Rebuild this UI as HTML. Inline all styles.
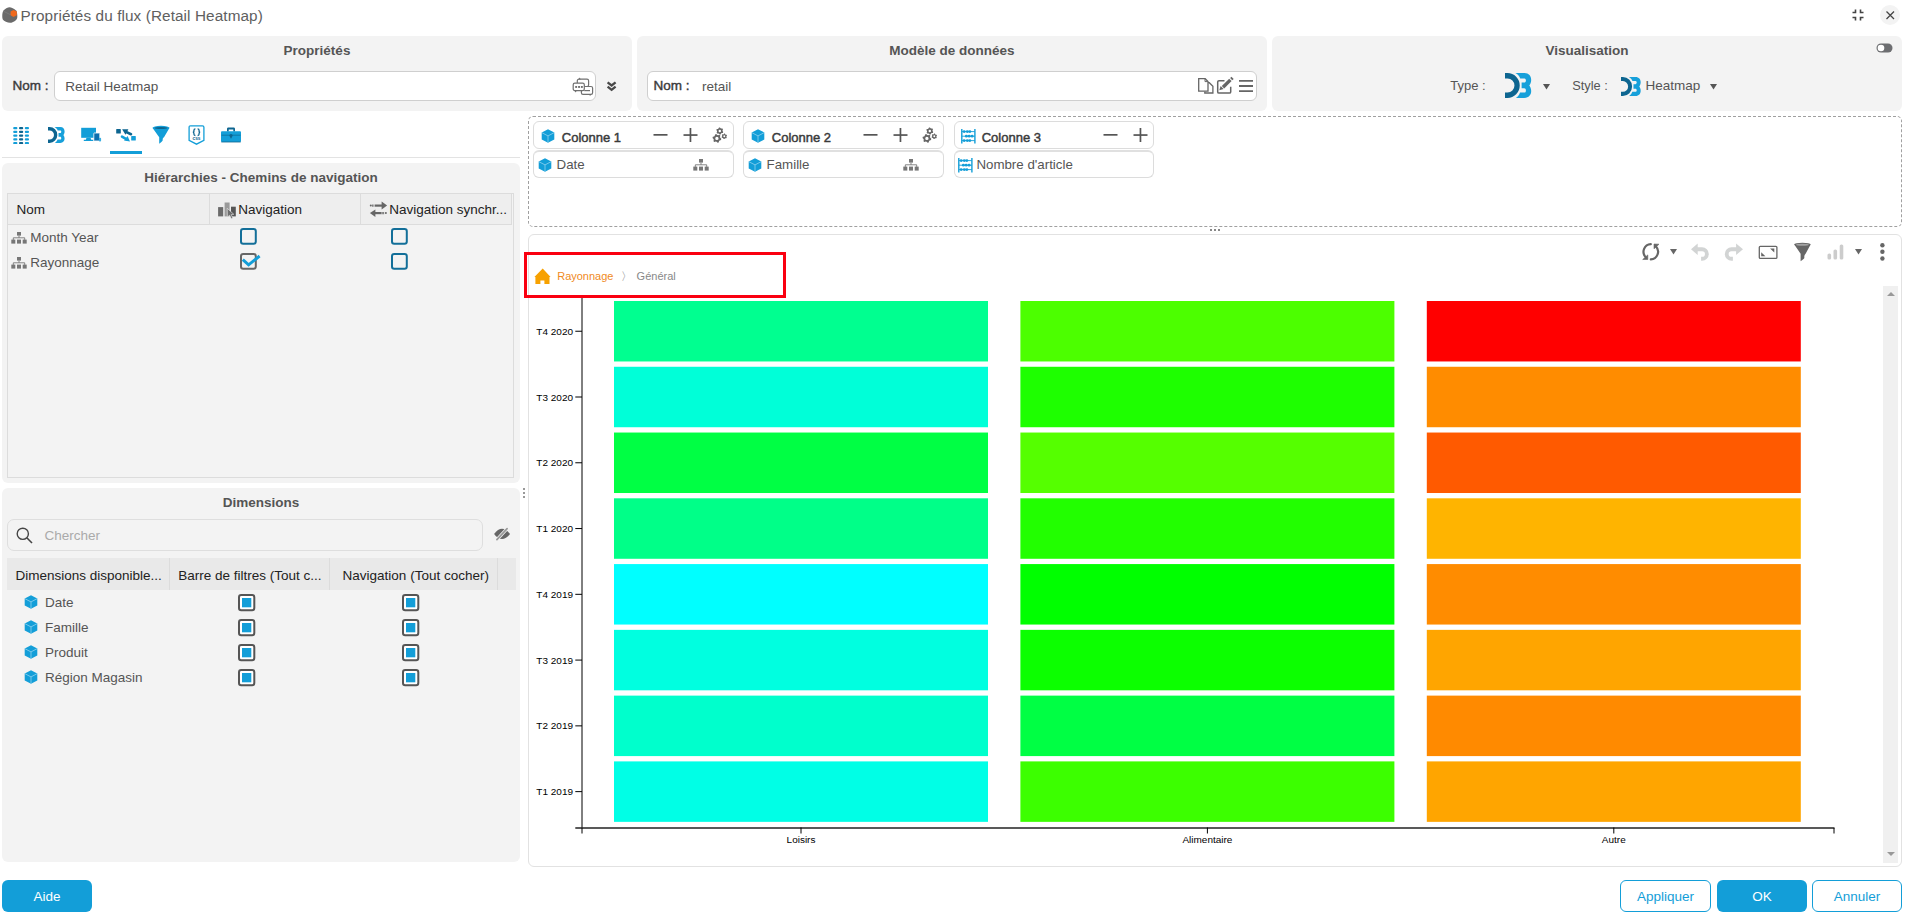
<!DOCTYPE html>
<html lang="fr"><head><meta charset="utf-8"><title>Propriétés du flux (Retail Heatmap)</title>
<style>
html,body{margin:0;padding:0;background:#fff;width:1905px;height:916px;overflow:hidden;font-family:"Liberation Sans", sans-serif;}
body{position:relative;}
</style></head><body>
<svg style="position:absolute;left:2.3px;top:6.8px;" width="16" height="17" viewBox="0 0 16 17"><path d="M7.5 0.3 C9 0.3 12.5 2 14 3.5 C15.3 5 15.5 9 15.2 11 C14.8 13.3 11 15.6 8.5 15.8 C6 16 2 14.5 0.8 12.5 C-0.2 10.5 0.3 5.5 1.3 3.8 C2.6 2 6 0.3 7.5 0.3 Z" fill="#6a6a6a"/><path d="M1 4 L8 7.5 L15 4" fill="none" stroke="#808080" stroke-width="0.7"/><path d="M11.5 2.9 L14.8 4.6 L14.8 8.2 L11.5 9.9 L8.6 8.2 L8.6 4.6 Z" fill="#f06a1e"/></svg>
<div style="position:absolute;left:20.5px;top:7.95px;font-size:15.3px;line-height:15.3px;font-weight:400;color:#606060;white-space:nowrap;letter-spacing:0.1px">Propriétés du flux (Retail Heatmap)</div>
<svg style="position:absolute;left:1852px;top:9px;" width="12" height="12" viewBox="0 0 12 12"><path d="M3.5 0.5 V3.5 H0.5 M8.5 0.5 V3.5 H11.5 M0.5 8.5 H3.5 V11.5 M11.5 8.5 H8.5 V11.5" fill="none" stroke="#444" stroke-width="1.6"/></svg>
<div style="position:absolute;left:1880px;top:5px;width:20px;height:20px;background:#f3f3f3;border-radius:50%"></div>
<svg style="position:absolute;left:1885.5px;top:10.5px;" width="9" height="9" viewBox="0 0 9 9"><path d="M0.5 0.5 L8 8 M8 0.5 L0.5 8" stroke="#444" stroke-width="1.3"/></svg>
<div style="position:absolute;left:2px;top:36px;width:630px;height:75px;background:#f3f3f3;border-radius:6px"></div>
<div style="position:absolute;left:637px;top:36px;width:630px;height:75px;background:#f3f3f3;border-radius:6px"></div>
<div style="position:absolute;left:1272px;top:36px;width:630px;height:75px;background:#f3f3f3;border-radius:6px"></div>
<div style="position:absolute;left:17.0px;top:43.77px;width:600px;text-align:center;font-size:13.5px;line-height:13.5px;font-weight:700;color:#555;white-space:nowrap;">Propriétés</div>
<div style="position:absolute;left:652.0px;top:43.77px;width:600px;text-align:center;font-size:13.5px;line-height:13.5px;font-weight:700;color:#555;white-space:nowrap;">Modèle de données</div>
<div style="position:absolute;left:1287.0px;top:43.77px;width:600px;text-align:center;font-size:13.5px;line-height:13.5px;font-weight:700;color:#555;white-space:nowrap;">Visualisation</div>
<div style="position:absolute;left:12.5px;top:78.67px;font-size:13.5px;line-height:13.5px;font-weight:400;color:#3a3a3a;white-space:nowrap;-webkit-text-stroke:0.4px #3a3a3a">Nom :</div>
<div style="position:absolute;left:54px;top:71px;width:542px;height:30px;background:#fff;border:1px solid #cfcfcf;border-radius:6px;box-sizing:border-box"></div>
<div style="position:absolute;left:65.2px;top:79.87px;font-size:13.5px;line-height:13.5px;font-weight:400;color:#555;white-space:nowrap;">Retail Heatmap</div>
<svg style="position:absolute;left:572px;top:77px;" width="22" height="20" viewBox="0 0 22 20"><rect x="5.3" y="2.1" width="11.3" height="7.4" rx="1.6" fill="#fff" stroke="#707070" stroke-width="1.2"/><path d="M6.3 2.4 L7.6 0.6 L8.8 2.4 Z" fill="#707070"/><rect x="9.4" y="9.5" width="11.2" height="7.9" rx="1.6" fill="#fff" stroke="#707070" stroke-width="1.2"/><path d="M16.8 17.2 L19.4 17.2 L18.1 19 Z" fill="#707070"/><rect x="1.2" y="6.1" width="11.1" height="7.5" rx="1.6" fill="#fff" stroke="#707070" stroke-width="1.2"/><path d="M2.6 13.4 L5.2 13.4 L3.2 15.4 Z" fill="#707070"/><rect x="3.2" y="9" width="1.9" height="1.9" fill="#707070"/><rect x="6.1" y="9" width="1.9" height="1.9" fill="#707070"/><rect x="8.9" y="9" width="1.9" height="1.9" fill="#707070"/><path d="M12.3 13.6 H18" stroke="#707070" stroke-width="1.2"/></svg>
<svg style="position:absolute;left:606px;top:80px;" width="12" height="13" viewBox="0 0 12 13"><path d="M1.6 2.3 L5.6 5.5 L9.6 2.3 M1.6 6.6 L5.6 9.8 L9.6 6.6" fill="none" stroke="#484848" stroke-width="2.3" stroke-linejoin="miter"/></svg>
<div style="position:absolute;left:647px;top:71px;width:610px;height:30px;background:#fff;border:1px solid #cfcfcf;border-radius:6px;box-sizing:border-box"></div>
<div style="position:absolute;left:653.5px;top:78.67px;font-size:13.5px;line-height:13.5px;font-weight:400;color:#3a3a3a;white-space:nowrap;-webkit-text-stroke:0.4px #3a3a3a">Nom :</div>
<div style="position:absolute;left:702px;top:79.87px;font-size:13.5px;line-height:13.5px;font-weight:400;color:#555;white-space:nowrap;">retail</div>
<svg style="position:absolute;left:1196px;top:76px;" width="60" height="20" viewBox="0 0 60 20"><path d="M11.6,6.7 H13.3 L16.9,10.3 V17 H8.8 V15.6" fill="none" stroke="#666" stroke-width="1.3"/><path d="M2.7,2.7 H9.2 L12,5.5 V15.2 H2.7 Z" fill="#fff" stroke="#666" stroke-width="1.3"/><path d="M9,2.8 V5.6 H11.8" fill="none" stroke="#666" stroke-width="1"/><path d="M28.5,4.7 H23 C22.2,4.7 21.7,5.2 21.7,6 V16 C21.7,16.8 22.2,17.1 23,17.1 H33.3 C34.1,17.1 34.7,16.7 34.7,16 V10.8" fill="none" stroke="#666" stroke-width="1.5"/><path d="M26.3,11.9 L34.8,3.6" stroke="#fff" stroke-width="5.5"/><path d="M27,11.2 L34.4,3.9" stroke="#666" stroke-width="3.4"/><path d="M35.2,3.1 L36.6,1.8" stroke="#666" stroke-width="3.2"/><path d="M23.3,14.2 L24.6,9.9 L27.6,12.9 Z" fill="#666"/><path d="M43,4.9 H57 M43,10 H57 M43,15.1 H57" stroke="#666" stroke-width="1.8"/></svg>
<svg style="position:absolute;left:1876px;top:42.8px;" width="17" height="10" viewBox="0 0 17 10"><rect x="0.5" y="0.5" width="16" height="9" rx="4.5" fill="#6d6e71"/><circle cx="5" cy="5" r="3.3" fill="#fff"/></svg>
<div style="position:absolute;left:1450.2px;top:79.0px;font-size:13px;line-height:13px;font-weight:400;color:#555;white-space:nowrap;">Type :</div>
<svg style="position:absolute;left:1504.8px;top:73.4px;overflow:visible" preserveAspectRatio="none" width="26.2" height="25" viewBox="0 0 26.3 25"><path d="M0,0 H2.5 A12.3,12.45 0 0 1 2.5,24.9 H0 V19.5 H2.5 A7,7.05 0 0 0 2.5,5.4 H0 Z" fill="#0d6590"/><path d="M10.4,0 H19.5 C24,0 26.3,3.2 26.3,6.9 C26.3,9.5 25.3,11.2 24.4,12.5 C25.3,13.8 26.3,15.5 26.3,18 C26.3,21.8 24,24.9 19.5,24.9 H10.9 C12.8,23.8 14.3,21.8 15.1,19.5 H19.7 C20.5,19.5 21,18.3 21,17.4 C21,16.2 20.3,15.3 19.3,15.3 H16.7 V9.5 H19.3 C20.3,9.5 21,8.5 21,7.4 C21,6.4 20.5,5.4 19.7,5.4 H15.3 C14.4,3 12.8,1.2 10.4,0 Z" fill="#17a0da"/></svg>
<svg style="position:absolute;left:1543.4px;top:83.6px;" width="7" height="6" viewBox="0 0 7 6"><path d="M0 0 H7 L3.5 5.5 Z" fill="#555"/></svg>
<div style="position:absolute;left:1572.2px;top:79.66px;font-size:12.8px;line-height:12.8px;font-weight:400;color:#555;white-space:nowrap;">Style :</div>
<svg style="position:absolute;left:1621px;top:76.5px;overflow:visible" preserveAspectRatio="none" width="19.7" height="19" viewBox="0 0 26.3 25"><path d="M0,0 H2.5 A12.3,12.45 0 0 1 2.5,24.9 H0 V19.5 H2.5 A7,7.05 0 0 0 2.5,5.4 H0 Z" fill="#0d6590"/><path d="M10.4,0 H19.5 C24,0 26.3,3.2 26.3,6.9 C26.3,9.5 25.3,11.2 24.4,12.5 C25.3,13.8 26.3,15.5 26.3,18 C26.3,21.8 24,24.9 19.5,24.9 H10.9 C12.8,23.8 14.3,21.8 15.1,19.5 H19.7 C20.5,19.5 21,18.3 21,17.4 C21,16.2 20.3,15.3 19.3,15.3 H16.7 V9.5 H19.3 C20.3,9.5 21,8.5 21,7.4 C21,6.4 20.5,5.4 19.7,5.4 H15.3 C14.4,3 12.8,1.2 10.4,0 Z" fill="#17a0da"/></svg>
<div style="position:absolute;left:1645.4px;top:79.07px;font-size:13.5px;line-height:13.5px;font-weight:400;color:#555;white-space:nowrap;">Heatmap</div>
<svg style="position:absolute;left:1710px;top:83.6px;" width="7" height="6" viewBox="0 0 7 6"><path d="M0 0 H7 L3.5 5.5 Z" fill="#555"/></svg>
<svg style="position:absolute;left:13px;top:127px;" width="17" height="17" viewBox="0 0 17 17"><rect x="0.1999999999999993" y="0.0" width="4.2" height="2.2" rx="1" fill="#139ed8"/><rect x="6" y="0.0" width="4.2" height="2.2" rx="1" fill="#0d6590"/><rect x="11.8" y="0.0" width="4.2" height="2.2" rx="1" fill="#139ed8"/><rect x="0.1999999999999993" y="3.75" width="4.2" height="2.2" rx="1" fill="#139ed8"/><rect x="6" y="3.75" width="4.2" height="2.2" rx="1" fill="#0d6590"/><rect x="11.8" y="3.75" width="4.2" height="2.2" rx="1" fill="#139ed8"/><rect x="0.1999999999999993" y="7.5" width="4.2" height="2.2" rx="1" fill="#139ed8"/><rect x="6" y="7.5" width="4.2" height="2.2" rx="1" fill="#0d6590"/><rect x="11.8" y="7.5" width="4.2" height="2.2" rx="1" fill="#139ed8"/><rect x="0.1999999999999993" y="11.25" width="4.2" height="2.2" rx="1" fill="#139ed8"/><rect x="6" y="11.25" width="4.2" height="2.2" rx="1" fill="#0d6590"/><rect x="11.8" y="11.25" width="4.2" height="2.2" rx="1" fill="#139ed8"/><rect x="0.1999999999999993" y="15.0" width="4.2" height="2.2" rx="1" fill="#139ed8"/><rect x="6" y="15.0" width="4.2" height="2.2" rx="1" fill="#0d6590"/><rect x="11.8" y="15.0" width="4.2" height="2.2" rx="1" fill="#139ed8"/></svg>
<svg style="position:absolute;left:47.6px;top:127px;overflow:visible" preserveAspectRatio="none" width="16.6" height="16" viewBox="0 0 26.3 25"><path d="M0,0 H2.5 A12.3,12.45 0 0 1 2.5,24.9 H0 V19.5 H2.5 A7,7.05 0 0 0 2.5,5.4 H0 Z" fill="#0d6590"/><path d="M10.4,0 H19.5 C24,0 26.3,3.2 26.3,6.9 C26.3,9.5 25.3,11.2 24.4,12.5 C25.3,13.8 26.3,15.5 26.3,18 C26.3,21.8 24,24.9 19.5,24.9 H10.9 C12.8,23.8 14.3,21.8 15.1,19.5 H19.7 C20.5,19.5 21,18.3 21,17.4 C21,16.2 20.3,15.3 19.3,15.3 H16.7 V9.5 H19.3 C20.3,9.5 21,8.5 21,7.4 C21,6.4 20.5,5.4 19.7,5.4 H15.3 C14.4,3 12.8,1.2 10.4,0 Z" fill="#17a0da"/></svg>
<svg style="position:absolute;left:81px;top:127px;" width="21" height="15" viewBox="0 0 21 15"><rect x="0.2" y="0.8" width="14.8" height="10" fill="#139ed8"/><path d="M5.5 10.8 h4 l0.8 2 h2 v1.2 h-9.5 v-1.2 h2 z" fill="#139ed8"/><rect x="12.8" y="6" width="6" height="8" rx="0.5" fill="#0d6fae" stroke="#fff" stroke-width="0.8"/><rect x="17.9" y="10.8" width="2.2" height="3.8" rx="1" fill="#3aaee0"/></svg>
<svg style="position:absolute;left:116px;top:128px;" width="21" height="15" viewBox="0 0 21 15"><rect x="0.2" y="1" width="4.6" height="4.6" rx="0.6" fill="#0d6590"/><path d="M6.1 1.2 L12.4 1.2 L9.5 6.8 Z" fill="#0d6590"/><path d="M10 3.9 L15 6.2" stroke="#0d6590" stroke-width="2.6" stroke-linecap="round"/><path d="M14 13.6 L8 12.6 L11.6 8.1 Z" fill="#139ed8"/><path d="M6 8.6 L10.8 11.4" stroke="#139ed8" stroke-width="2.6" stroke-linecap="round"/><rect x="15.2" y="8" width="4.6" height="4.6" rx="0.6" fill="#139ed8"/></svg>
<svg style="position:absolute;left:152px;top:125px;" width="18" height="19" viewBox="0 0 18 19"><path d="M0.6 3 L7.2 12.2 V18.8 C9 17.6 10.8 16.2 10.8 15.1 C10.4 14.2 10.9 12.9 12 12.2 L17.4 3 Z" fill="#139ed8"/><ellipse cx="9" cy="2.8" rx="8.5" ry="2" fill="#139ed8"/><ellipse cx="9" cy="3" rx="6.3" ry="1.1" fill="#0d6590"/></svg>
<svg style="position:absolute;left:187.5px;top:125px;" width="18" height="20" viewBox="0 0 18 20"><path d="M1.1 2.2 Q1.1 0.8 2.5 0.8 H14.5 Q15.9 0.8 15.9 2.2 V15.3 L8.5 19.2 L1.1 15.3 Z" fill="#fff" stroke="#139ed8" stroke-width="1.3"/><path d="M7.4 3.9 C6 3.9 5.9 4.6 5.9 5.6 V6.4 C5.9 7 5.5 7.2 4.8 7.2 C5.5 7.2 5.9 7.5 5.9 8.1 V9 C5.9 10 6 10.5 7.4 10.5 M9.6 3.9 C11 3.9 11.1 4.6 11.1 5.6 V6.4 C11.1 7 11.5 7.2 12.2 7.2 C11.5 7.2 11.1 7.5 11.1 8.1 V9 C11.1 10 11 10.5 9.6 10.5" fill="none" stroke="#0d6590" stroke-width="1.3"/><text x="8.5" y="15.3" text-anchor="middle" font-family="Liberation Sans" font-size="4.8" font-weight="700" fill="#0d6590">css</text></svg>
<svg style="position:absolute;left:221px;top:127px;" width="20" height="16" viewBox="0 0 20 16"><path d="M6 4.5 V1.8 C6 0.8 6.8 0.5 7.5 0.5 H12.5 C13.2 0.5 14 0.8 14 1.8 V4.5 H12.3 V2.4 H7.7 V4.5 Z" fill="#0d6590"/><rect x="0" y="4.3" width="20" height="10.8" rx="1" fill="#139ed8"/><path d="M0.5 8.2 H19.5" stroke="#0d6590" stroke-width="0.7"/><path d="M0.3 15 H19.7" stroke="#0d6590" stroke-width="0.8"/><circle cx="10" cy="8.6" r="1.6" fill="#0d6590"/><path d="M9.3 9 h1.4 v2.2 h-1.4 z" fill="#0d6590"/></svg>
<div style="position:absolute;left:110px;top:151px;width:32px;height:3px;background:#139ed8"></div>
<div style="position:absolute;left:2px;top:157px;width:518px;height:1px;background:#e3e3e3"></div>
<div style="position:absolute;left:2px;top:163px;width:518px;height:320px;background:#f3f3f3;border-radius:6px"></div>
<div style="position:absolute;left:-39.0px;top:171.07px;width:600px;text-align:center;font-size:13.5px;line-height:13.5px;font-weight:700;color:#555;white-space:nowrap;">Hiérarchies - Chemins de navigation</div>
<div style="position:absolute;left:7px;top:193px;width:507px;height:285px;border:1px solid #dcdcdc;box-sizing:border-box"></div>
<div style="position:absolute;left:8px;top:194px;width:504px;height:31px;background:#eeeeee;border-bottom:1px solid #dcdcdc;box-sizing:border-box"></div>
<div style="position:absolute;left:209px;top:194px;width:1px;height:31px;background:#dcdcdc"></div>
<div style="position:absolute;left:360px;top:194px;width:1px;height:31px;background:#dcdcdc"></div>
<div style="position:absolute;left:511px;top:194px;width:1px;height:31px;background:#dcdcdc"></div>
<div style="position:absolute;left:16.4px;top:203.07px;font-size:13.5px;line-height:13.5px;font-weight:400;color:#222;white-space:nowrap;">Nom</div>
<svg style="position:absolute;left:218px;top:201.5px;" width="19" height="18" viewBox="0 0 19 18"><rect x="0.1" y="5.1" width="5.1" height="9.3" fill="#6a6a6a"/><rect x="6.6" y="0.5" width="5" height="13.9" fill="#9a9a9a"/><rect x="13" y="4.7" width="4.8" height="9.7" fill="#555"/><path d="M9.2 6.3 L15.8 12.3 L13.2 12.6 L14.9 16.1 L13.3 16.8 L11.6 13.3 L9.4 15.1 Z" fill="#6d6d6d" stroke="#f0f0f0" stroke-width="0.6"/></svg>
<div style="position:absolute;left:238.3px;top:203.07px;font-size:13.5px;line-height:13.5px;font-weight:400;color:#222;white-space:nowrap;">Navigation</div>
<svg style="position:absolute;left:368.5px;top:200.5px;" width="19" height="17" viewBox="0 0 19 17"><path d="M6 4.6 H13" stroke="#666" stroke-width="2.2"/><path d="M3.2 4.6 H5.4" stroke="#666" stroke-width="2.2" stroke-dasharray="0.9 0.5"/><circle cx="1.8" cy="4.6" r="1" fill="#666"/><path d="M12.6 0.6 L18.1 4.6 L12.6 8.4 Z" fill="#666"/><path d="M6 12.1 H12.5" stroke="#666" stroke-width="2.2"/><path d="M12.8 12.1 H15.4" stroke="#666" stroke-width="2.2" stroke-dasharray="0.9 0.5"/><circle cx="16.9" cy="12.1" r="1" fill="#666"/><path d="M0.9 12.1 L6.4 8.4 L6.4 16 Z" fill="#666"/></svg>
<div style="position:absolute;left:389.3px;top:203.07px;font-size:13.5px;line-height:13.5px;font-weight:400;color:#222;white-space:nowrap;">Navigation synchr...</div>
<svg style="position:absolute;left:11.2px;top:232.0px;" width="16" height="12" viewBox="0 0 16 12"><rect x="6" y="0" width="4" height="3.6" fill="#777"/><path d="M8 3.6 V5.8 M2.3 7.9 V5.8 H13.7 V7.9" fill="none" stroke="#777" stroke-width="0.9"/><rect x="0.3" y="7.6" width="4" height="4" fill="#777"/><rect x="6" y="7.6" width="4" height="4" fill="#777"/><rect x="11.7" y="7.6" width="4" height="4" fill="#777"/></svg>
<div style="position:absolute;left:30.3px;top:230.77px;font-size:13.5px;line-height:13.5px;font-weight:400;color:#555;white-space:nowrap;">Month Year</div>
<svg style="position:absolute;left:240px;top:228.4px;" width="17" height="17" viewBox="0 0 17 17"><rect x="1" y="1" width="14.8" height="14.8" rx="2.2" fill="none" stroke="#136f99" stroke-width="2"/></svg>
<svg style="position:absolute;left:391.2px;top:228.4px;" width="17" height="17" viewBox="0 0 17 17"><rect x="1" y="1" width="14.8" height="14.8" rx="2.2" fill="none" stroke="#136f99" stroke-width="2"/></svg>
<svg style="position:absolute;left:11.2px;top:257.0px;" width="16" height="12" viewBox="0 0 16 12"><rect x="6" y="0" width="4" height="3.6" fill="#777"/><path d="M8 3.6 V5.8 M2.3 7.9 V5.8 H13.7 V7.9" fill="none" stroke="#777" stroke-width="0.9"/><rect x="0.3" y="7.6" width="4" height="4" fill="#777"/><rect x="6" y="7.6" width="4" height="4" fill="#777"/><rect x="11.7" y="7.6" width="4" height="4" fill="#777"/></svg>
<div style="position:absolute;left:30.3px;top:255.77px;font-size:13.5px;line-height:13.5px;font-weight:400;color:#555;white-space:nowrap;">Rayonnage</div>
<svg style="position:absolute;left:240px;top:253.40000000000003px;overflow:visible" width="21" height="17" viewBox="0 0 21 17"><rect x="1" y="1" width="14.8" height="14.8" rx="2.2" fill="none" stroke="#666" stroke-width="2"/><path d="M2.8 6.6 L8.6 11.9 L19.6 3" fill="none" stroke="#139ed8" stroke-width="2.9"/></svg>
<svg style="position:absolute;left:391.2px;top:253.40000000000003px;" width="17" height="17" viewBox="0 0 17 17"><rect x="1" y="1" width="14.8" height="14.8" rx="2.2" fill="none" stroke="#136f99" stroke-width="2"/></svg>
<div style="position:absolute;left:523px;top:488px;width:2px;height:2px;background:#999"></div>
<div style="position:absolute;left:523px;top:492px;width:2px;height:2px;background:#999"></div>
<div style="position:absolute;left:523px;top:496px;width:2px;height:2px;background:#999"></div>
<div style="position:absolute;left:2px;top:488px;width:518px;height:374px;background:#f3f3f3;border-radius:6px"></div>
<div style="position:absolute;left:-39.0px;top:495.97px;width:600px;text-align:center;font-size:13.5px;line-height:13.5px;font-weight:700;color:#555;white-space:nowrap;">Dimensions</div>
<div style="position:absolute;left:7px;top:519px;width:476px;height:32px;border:1px solid #dedede;border-radius:7px;box-sizing:border-box"></div>
<svg style="position:absolute;left:16.4px;top:526.6px;" width="17" height="17" viewBox="0 0 17 17"><circle cx="6.8" cy="6.8" r="5.6" fill="none" stroke="#444" stroke-width="1.4"/><path d="M10.8 10.8 L16 16" stroke="#444" stroke-width="1.6"/></svg>
<div style="position:absolute;left:44.4px;top:529.47px;font-size:13.5px;line-height:13.5px;font-weight:400;color:#aaa;white-space:nowrap;">Chercher</div>
<svg style="position:absolute;left:491px;top:526px;" width="20" height="17" viewBox="0 0 20 17"><path d="M3.1 8 C5.5 4.5 8.5 2.8 11 2.8 C13.5 2.8 16.5 4.5 19 8 C16.5 11.5 13.5 13 11 13 C8.5 13 5.5 11.5 3.1 8 Z" fill="#666"/><path d="M5.9 13.6 L16.1 2.6" stroke="#f3f3f3" stroke-width="3.2"/><path d="M5.9 13.6 L16.1 2.6" stroke="#999" stroke-width="1.7" stroke-linecap="round"/></svg>
<div style="position:absolute;left:7px;top:558px;width:509px;height:32px;background:#e9e9e9"></div>
<div style="position:absolute;left:169px;top:558px;width:1px;height:32px;background:#dcdcdc"></div>
<div style="position:absolute;left:329px;top:558px;width:1px;height:32px;background:#dcdcdc"></div>
<div style="position:absolute;left:497px;top:558px;width:1px;height:32px;background:#dcdcdc"></div>
<div style="position:absolute;left:15.4px;top:569.07px;font-size:13.5px;line-height:13.5px;font-weight:400;color:#222;white-space:nowrap;">Dimensions disponible...</div>
<div style="position:absolute;left:178.3px;top:569.07px;font-size:13.5px;line-height:13.5px;font-weight:400;color:#222;white-space:nowrap;">Barre de filtres (Tout c...</div>
<div style="position:absolute;left:342.6px;top:569.07px;font-size:13.5px;line-height:13.5px;font-weight:400;color:#222;white-space:nowrap;">Navigation (Tout cocher)</div>
<svg style="position:absolute;left:24px;top:594.9px;" width="14" height="14" viewBox="0 0 14 14"><path d="M7 0.3 L13.3 3.5 L13.3 10.5 L7 13.7 L0.7 10.5 L0.7 3.5 Z" fill="#139ed8"/><path d="M0.9 3.7 L7 6.9 L13.1 3.7 M7 6.9 V13.5" fill="none" stroke="#8fd2ef" stroke-width="0.8"/></svg>
<div style="position:absolute;left:45px;top:596.07px;font-size:13.5px;line-height:13.5px;font-weight:400;color:#555;white-space:nowrap;">Date</div>
<svg style="position:absolute;left:238px;top:594.0px;" width="18" height="18" viewBox="0 0 18 18"><rect x="1" y="1" width="15.3" height="15.3" rx="2.2" fill="#fff" stroke="#555" stroke-width="2"/><rect x="4" y="4" width="9.3" height="9.3" fill="#139ed8"/></svg>
<svg style="position:absolute;left:401.9px;top:594.0px;" width="18" height="18" viewBox="0 0 18 18"><rect x="1" y="1" width="15.3" height="15.3" rx="2.2" fill="#fff" stroke="#555" stroke-width="2"/><rect x="4" y="4" width="9.3" height="9.3" fill="#139ed8"/></svg>
<svg style="position:absolute;left:24px;top:619.9px;" width="14" height="14" viewBox="0 0 14 14"><path d="M7 0.3 L13.3 3.5 L13.3 10.5 L7 13.7 L0.7 10.5 L0.7 3.5 Z" fill="#139ed8"/><path d="M0.9 3.7 L7 6.9 L13.1 3.7 M7 6.9 V13.5" fill="none" stroke="#8fd2ef" stroke-width="0.8"/></svg>
<div style="position:absolute;left:45px;top:621.07px;font-size:13.5px;line-height:13.5px;font-weight:400;color:#555;white-space:nowrap;">Famille</div>
<svg style="position:absolute;left:238px;top:619.0px;" width="18" height="18" viewBox="0 0 18 18"><rect x="1" y="1" width="15.3" height="15.3" rx="2.2" fill="#fff" stroke="#555" stroke-width="2"/><rect x="4" y="4" width="9.3" height="9.3" fill="#139ed8"/></svg>
<svg style="position:absolute;left:401.9px;top:619.0px;" width="18" height="18" viewBox="0 0 18 18"><rect x="1" y="1" width="15.3" height="15.3" rx="2.2" fill="#fff" stroke="#555" stroke-width="2"/><rect x="4" y="4" width="9.3" height="9.3" fill="#139ed8"/></svg>
<svg style="position:absolute;left:24px;top:644.9px;" width="14" height="14" viewBox="0 0 14 14"><path d="M7 0.3 L13.3 3.5 L13.3 10.5 L7 13.7 L0.7 10.5 L0.7 3.5 Z" fill="#139ed8"/><path d="M0.9 3.7 L7 6.9 L13.1 3.7 M7 6.9 V13.5" fill="none" stroke="#8fd2ef" stroke-width="0.8"/></svg>
<div style="position:absolute;left:45px;top:646.07px;font-size:13.5px;line-height:13.5px;font-weight:400;color:#555;white-space:nowrap;">Produit</div>
<svg style="position:absolute;left:238px;top:644.0px;" width="18" height="18" viewBox="0 0 18 18"><rect x="1" y="1" width="15.3" height="15.3" rx="2.2" fill="#fff" stroke="#555" stroke-width="2"/><rect x="4" y="4" width="9.3" height="9.3" fill="#139ed8"/></svg>
<svg style="position:absolute;left:401.9px;top:644.0px;" width="18" height="18" viewBox="0 0 18 18"><rect x="1" y="1" width="15.3" height="15.3" rx="2.2" fill="#fff" stroke="#555" stroke-width="2"/><rect x="4" y="4" width="9.3" height="9.3" fill="#139ed8"/></svg>
<svg style="position:absolute;left:24px;top:669.9px;" width="14" height="14" viewBox="0 0 14 14"><path d="M7 0.3 L13.3 3.5 L13.3 10.5 L7 13.7 L0.7 10.5 L0.7 3.5 Z" fill="#139ed8"/><path d="M0.9 3.7 L7 6.9 L13.1 3.7 M7 6.9 V13.5" fill="none" stroke="#8fd2ef" stroke-width="0.8"/></svg>
<div style="position:absolute;left:45px;top:671.07px;font-size:13.5px;line-height:13.5px;font-weight:400;color:#555;white-space:nowrap;">Région Magasin</div>
<svg style="position:absolute;left:238px;top:669.0px;" width="18" height="18" viewBox="0 0 18 18"><rect x="1" y="1" width="15.3" height="15.3" rx="2.2" fill="#fff" stroke="#555" stroke-width="2"/><rect x="4" y="4" width="9.3" height="9.3" fill="#139ed8"/></svg>
<svg style="position:absolute;left:401.9px;top:669.0px;" width="18" height="18" viewBox="0 0 18 18"><rect x="1" y="1" width="15.3" height="15.3" rx="2.2" fill="#fff" stroke="#555" stroke-width="2"/><rect x="4" y="4" width="9.3" height="9.3" fill="#139ed8"/></svg>
<div style="position:absolute;left:528px;top:116px;width:1374px;height:111px;border:1px dashed #a0a0a0;border-radius:5px;box-sizing:border-box"></div>
<div style="position:absolute;left:533.2px;top:121px;width:201.19999999999993px;height:28px;background:#fff;border:1px solid #dcdcdc;border-radius:6px;box-sizing:border-box"></div>
<div style="position:absolute;left:533.2px;top:150px;width:201.19999999999993px;height:28px;background:#fff;border:1px solid #dcdcdc;border-top:2px solid #e0e0e0;border-radius:6px;box-sizing:border-box"></div>
<svg style="position:absolute;left:541.2px;top:129px;" width="14" height="14" viewBox="0 0 14 14"><path d="M7 0.3 L13.3 3.5 L13.3 10.5 L7 13.7 L0.7 10.5 L0.7 3.5 Z" fill="#139ed8"/><path d="M0.9 3.7 L7 6.9 L13.1 3.7 M7 6.9 V13.5" fill="none" stroke="#8fd2ef" stroke-width="0.8"/></svg>
<svg style="position:absolute;left:537.9000000000001px;top:157.8px;" width="14" height="14" viewBox="0 0 14 14"><path d="M7 0.3 L13.3 3.5 L13.3 10.5 L7 13.7 L0.7 10.5 L0.7 3.5 Z" fill="#139ed8"/><path d="M0.9 3.7 L7 6.9 L13.1 3.7 M7 6.9 V13.5" fill="none" stroke="#8fd2ef" stroke-width="0.8"/></svg>
<div style="position:absolute;left:561.8000000000001px;top:131.0px;font-size:13px;line-height:13px;font-weight:400;color:#3a3a3a;white-space:nowrap;-webkit-text-stroke:0.45px #3a3a3a">Colonne 1</div>
<svg style="position:absolute;left:653.0px;top:134.2px;" width="15" height="2" viewBox="0 0 15 2"><rect x="0.5" y="0" width="14" height="1.7" fill="#555"/></svg>
<svg style="position:absolute;left:683.0px;top:128px;" width="15" height="15" viewBox="0 0 15 15"><rect x="0.5" y="6.2" width="14" height="1.7" fill="#555"/><rect x="6.6" y="0" width="1.7" height="14" fill="#555"/></svg>
<svg style="position:absolute;left:708.0px;top:124px;" width="24" height="22" viewBox="0 0 24 22"><path d="M15.24,8.06 L14.85,8.92 L13.71,9.06 L13.11,9.48 L12.60,10.51 L11.66,10.60 L10.97,9.68 L10.30,9.38 L9.16,9.45 L8.62,8.68 L9.06,7.62 L8.99,6.89 L8.36,5.94 L8.75,5.08 L9.89,4.94 L10.49,4.52 L11.00,3.49 L11.94,3.40 L12.63,4.32 L13.30,4.62 L14.44,4.55 L14.98,5.32 L14.54,6.38 L14.61,7.11 Z M13.02,7.00 A1.22,1.22 0 1 0 10.58,7.00 A1.22,1.22 0 1 0 13.02,7.00 Z" fill="#666" fill-rule="evenodd"/><path d="M13.28,14.84 L13.02,15.96 L11.69,16.40 L11.07,17.06 L10.71,18.41 L9.61,18.74 L8.56,17.81 L7.69,17.61 L6.33,17.97 L5.49,17.19 L5.77,15.81 L5.51,14.95 L4.52,13.96 L4.78,12.84 L6.11,12.40 L6.73,11.74 L7.09,10.39 L8.19,10.06 L9.24,10.99 L10.11,11.19 L11.47,10.83 L12.31,11.61 L12.03,12.99 L12.29,13.85 Z M10.57,14.40 A1.67,1.67 0 1 0 7.23,14.40 A1.67,1.67 0 1 0 10.57,14.40 Z" fill="#666" fill-rule="evenodd"/><path d="M18.76,13.64 L18.33,14.23 L17.44,14.17 L16.91,14.40 L16.37,15.10 L15.64,15.02 L15.25,14.22 L14.79,13.88 L13.91,13.76 L13.61,13.09 L14.12,12.35 L14.18,11.78 L13.84,10.96 L14.27,10.37 L15.16,10.43 L15.69,10.20 L16.23,9.50 L16.96,9.58 L17.35,10.38 L17.81,10.72 L18.69,10.84 L18.99,11.51 L18.48,12.25 L18.42,12.82 Z M17.25,12.30 A0.95,0.95 0 1 0 15.35,12.30 A0.95,0.95 0 1 0 17.25,12.30 Z" fill="#666" fill-rule="evenodd"/></svg>
<div style="position:absolute;left:556.6px;top:158.14px;font-size:13.3px;line-height:13.3px;font-weight:400;color:#555;white-space:nowrap;">Date</div>
<svg style="position:absolute;left:692.8000000000001px;top:159px;" width="16" height="12" viewBox="0 0 16 12"><rect x="6" y="0" width="4" height="3.6" fill="#777"/><path d="M8 3.6 V5.8 M2.3 7.9 V5.8 H13.7 V7.9" fill="none" stroke="#777" stroke-width="0.9"/><rect x="0.3" y="7.6" width="4" height="4" fill="#777"/><rect x="6" y="7.6" width="4" height="4" fill="#777"/><rect x="11.7" y="7.6" width="4" height="4" fill="#777"/></svg>
<div style="position:absolute;left:743.2px;top:121px;width:201.19999999999993px;height:28px;background:#fff;border:1px solid #dcdcdc;border-radius:6px;box-sizing:border-box"></div>
<div style="position:absolute;left:743.2px;top:150px;width:201.19999999999993px;height:28px;background:#fff;border:1px solid #dcdcdc;border-top:2px solid #e0e0e0;border-radius:6px;box-sizing:border-box"></div>
<svg style="position:absolute;left:751.2px;top:129px;" width="14" height="14" viewBox="0 0 14 14"><path d="M7 0.3 L13.3 3.5 L13.3 10.5 L7 13.7 L0.7 10.5 L0.7 3.5 Z" fill="#139ed8"/><path d="M0.9 3.7 L7 6.9 L13.1 3.7 M7 6.9 V13.5" fill="none" stroke="#8fd2ef" stroke-width="0.8"/></svg>
<svg style="position:absolute;left:747.9000000000001px;top:157.8px;" width="14" height="14" viewBox="0 0 14 14"><path d="M7 0.3 L13.3 3.5 L13.3 10.5 L7 13.7 L0.7 10.5 L0.7 3.5 Z" fill="#139ed8"/><path d="M0.9 3.7 L7 6.9 L13.1 3.7 M7 6.9 V13.5" fill="none" stroke="#8fd2ef" stroke-width="0.8"/></svg>
<div style="position:absolute;left:771.8000000000001px;top:131.0px;font-size:13px;line-height:13px;font-weight:400;color:#3a3a3a;white-space:nowrap;-webkit-text-stroke:0.45px #3a3a3a">Colonne 2</div>
<svg style="position:absolute;left:863.0px;top:134.2px;" width="15" height="2" viewBox="0 0 15 2"><rect x="0.5" y="0" width="14" height="1.7" fill="#555"/></svg>
<svg style="position:absolute;left:893.0px;top:128px;" width="15" height="15" viewBox="0 0 15 15"><rect x="0.5" y="6.2" width="14" height="1.7" fill="#555"/><rect x="6.6" y="0" width="1.7" height="14" fill="#555"/></svg>
<svg style="position:absolute;left:918.0px;top:124px;" width="24" height="22" viewBox="0 0 24 22"><path d="M15.24,8.06 L14.85,8.92 L13.71,9.06 L13.11,9.48 L12.60,10.51 L11.66,10.60 L10.97,9.68 L10.30,9.38 L9.16,9.45 L8.62,8.68 L9.06,7.62 L8.99,6.89 L8.36,5.94 L8.75,5.08 L9.89,4.94 L10.49,4.52 L11.00,3.49 L11.94,3.40 L12.63,4.32 L13.30,4.62 L14.44,4.55 L14.98,5.32 L14.54,6.38 L14.61,7.11 Z M13.02,7.00 A1.22,1.22 0 1 0 10.58,7.00 A1.22,1.22 0 1 0 13.02,7.00 Z" fill="#666" fill-rule="evenodd"/><path d="M13.28,14.84 L13.02,15.96 L11.69,16.40 L11.07,17.06 L10.71,18.41 L9.61,18.74 L8.56,17.81 L7.69,17.61 L6.33,17.97 L5.49,17.19 L5.77,15.81 L5.51,14.95 L4.52,13.96 L4.78,12.84 L6.11,12.40 L6.73,11.74 L7.09,10.39 L8.19,10.06 L9.24,10.99 L10.11,11.19 L11.47,10.83 L12.31,11.61 L12.03,12.99 L12.29,13.85 Z M10.57,14.40 A1.67,1.67 0 1 0 7.23,14.40 A1.67,1.67 0 1 0 10.57,14.40 Z" fill="#666" fill-rule="evenodd"/><path d="M18.76,13.64 L18.33,14.23 L17.44,14.17 L16.91,14.40 L16.37,15.10 L15.64,15.02 L15.25,14.22 L14.79,13.88 L13.91,13.76 L13.61,13.09 L14.12,12.35 L14.18,11.78 L13.84,10.96 L14.27,10.37 L15.16,10.43 L15.69,10.20 L16.23,9.50 L16.96,9.58 L17.35,10.38 L17.81,10.72 L18.69,10.84 L18.99,11.51 L18.48,12.25 L18.42,12.82 Z M17.25,12.30 A0.95,0.95 0 1 0 15.35,12.30 A0.95,0.95 0 1 0 17.25,12.30 Z" fill="#666" fill-rule="evenodd"/></svg>
<div style="position:absolute;left:766.6px;top:158.14px;font-size:13.3px;line-height:13.3px;font-weight:400;color:#555;white-space:nowrap;">Famille</div>
<svg style="position:absolute;left:902.8000000000001px;top:159px;" width="16" height="12" viewBox="0 0 16 12"><rect x="6" y="0" width="4" height="3.6" fill="#777"/><path d="M8 3.6 V5.8 M2.3 7.9 V5.8 H13.7 V7.9" fill="none" stroke="#777" stroke-width="0.9"/><rect x="0.3" y="7.6" width="4" height="4" fill="#777"/><rect x="6" y="7.6" width="4" height="4" fill="#777"/><rect x="11.7" y="7.6" width="4" height="4" fill="#777"/></svg>
<div style="position:absolute;left:953.7px;top:121px;width:200.5px;height:28px;background:#fff;border:1px solid #dcdcdc;border-radius:6px;box-sizing:border-box"></div>
<div style="position:absolute;left:953.7px;top:150px;width:200.5px;height:28px;background:#fff;border:1px solid #dcdcdc;border-top:2px solid #e0e0e0;border-radius:6px;box-sizing:border-box"></div>
<svg style="position:absolute;left:960.7px;top:128.8px;" width="15" height="15" viewBox="0 0 15 15"><path d="M0.8 0 V14.6 M13.9 0 V14.6" stroke="#139ed8" stroke-width="1.4"/><path d="M0.8 2.6 H13.9" stroke="#139ed8" stroke-width="0.9"/><ellipse cx="3.2" cy="2.6" rx="1.5" ry="1.35" fill="#139ed8"/><ellipse cx="6.3" cy="2.6" rx="1.5" ry="1.35" fill="#139ed8"/><ellipse cx="8.8" cy="2.6" rx="1.5" ry="1.35" fill="#139ed8"/><path d="M0.8 7.2 H13.9" stroke="#139ed8" stroke-width="0.9"/><ellipse cx="5.4" cy="7.2" rx="1.5" ry="1.35" fill="#139ed8"/><ellipse cx="8.2" cy="7.2" rx="1.5" ry="1.35" fill="#139ed8"/><ellipse cx="11.1" cy="7.2" rx="1.5" ry="1.35" fill="#139ed8"/><path d="M0.8 11.6 H13.9" stroke="#139ed8" stroke-width="0.9"/><ellipse cx="3.2" cy="11.6" rx="1.5" ry="1.35" fill="#139ed8"/><ellipse cx="6.3" cy="11.6" rx="1.5" ry="1.35" fill="#139ed8"/><ellipse cx="8.8" cy="11.6" rx="1.5" ry="1.35" fill="#139ed8"/></svg>
<svg style="position:absolute;left:957.7px;top:157.8px;" width="15" height="15" viewBox="0 0 15 15"><path d="M0.8 0 V14.6 M13.9 0 V14.6" stroke="#139ed8" stroke-width="1.4"/><path d="M0.8 2.6 H13.9" stroke="#139ed8" stroke-width="0.9"/><ellipse cx="3.2" cy="2.6" rx="1.5" ry="1.35" fill="#139ed8"/><ellipse cx="6.3" cy="2.6" rx="1.5" ry="1.35" fill="#139ed8"/><ellipse cx="8.8" cy="2.6" rx="1.5" ry="1.35" fill="#139ed8"/><path d="M0.8 7.2 H13.9" stroke="#139ed8" stroke-width="0.9"/><ellipse cx="5.4" cy="7.2" rx="1.5" ry="1.35" fill="#139ed8"/><ellipse cx="8.2" cy="7.2" rx="1.5" ry="1.35" fill="#139ed8"/><ellipse cx="11.1" cy="7.2" rx="1.5" ry="1.35" fill="#139ed8"/><path d="M0.8 11.6 H13.9" stroke="#139ed8" stroke-width="0.9"/><ellipse cx="3.2" cy="11.6" rx="1.5" ry="1.35" fill="#139ed8"/><ellipse cx="6.3" cy="11.6" rx="1.5" ry="1.35" fill="#139ed8"/><ellipse cx="8.8" cy="11.6" rx="1.5" ry="1.35" fill="#139ed8"/></svg>
<div style="position:absolute;left:981.7px;top:131.0px;font-size:13px;line-height:13px;font-weight:400;color:#3a3a3a;white-space:nowrap;-webkit-text-stroke:0.45px #3a3a3a">Colonne 3</div>
<svg style="position:absolute;left:1103.0px;top:134.2px;" width="15" height="2" viewBox="0 0 15 2"><rect x="0.5" y="0" width="14" height="1.7" fill="#555"/></svg>
<svg style="position:absolute;left:1133.0px;top:128px;" width="15" height="15" viewBox="0 0 15 15"><rect x="0.5" y="6.2" width="14" height="1.7" fill="#555"/><rect x="6.6" y="0" width="1.7" height="14" fill="#555"/></svg>
<div style="position:absolute;left:976.4000000000001px;top:158.14px;font-size:13.3px;line-height:13.3px;font-weight:400;color:#555;white-space:nowrap;">Nombre d&#39;article</div>
<div style="position:absolute;left:1210px;top:229px;width:2px;height:2px;background:#888"></div>
<div style="position:absolute;left:1214px;top:229px;width:2px;height:2px;background:#888"></div>
<div style="position:absolute;left:1218px;top:229px;width:2px;height:2px;background:#888"></div>
<div style="position:absolute;left:528px;top:234px;width:1374px;height:633px;border:1px solid #e2e2e2;border-radius:6px;box-sizing:border-box"></div>
<svg style="position:absolute;left:0px;top:0px;" width="1905" height="916" viewBox="0 0 1905 916"><rect x="614.00" y="301.00" width="374" height="60.47" fill="#00ff90"/><rect x="614.00" y="366.77" width="374" height="60.47" fill="#00ffd8"/><rect x="614.00" y="432.54" width="374" height="60.47" fill="#00ff44"/><rect x="614.00" y="498.31" width="374" height="60.47" fill="#00ff88"/><rect x="614.00" y="564.08" width="374" height="60.47" fill="#00ffff"/><rect x="614.00" y="629.85" width="374" height="60.47" fill="#00ffe0"/><rect x="614.00" y="695.62" width="374" height="60.47" fill="#00ffcc"/><rect x="614.00" y="761.39" width="374" height="60.47" fill="#00ffe6"/><rect x="1020.40" y="301.00" width="374" height="60.47" fill="#4cff00"/><rect x="1020.40" y="366.77" width="374" height="60.47" fill="#1eff00"/><rect x="1020.40" y="432.54" width="374" height="60.47" fill="#55ff00"/><rect x="1020.40" y="498.31" width="374" height="60.47" fill="#22ff00"/><rect x="1020.40" y="564.08" width="374" height="60.47" fill="#00ff00"/><rect x="1020.40" y="629.85" width="374" height="60.47" fill="#0cff00"/><rect x="1020.40" y="695.62" width="374" height="60.47" fill="#00ff44"/><rect x="1020.40" y="761.39" width="374" height="60.47" fill="#3cff00"/><rect x="1426.80" y="301.00" width="374" height="60.47" fill="#ff0000"/><rect x="1426.80" y="366.77" width="374" height="60.47" fill="#ff8c00"/><rect x="1426.80" y="432.54" width="374" height="60.47" fill="#ff5a00"/><rect x="1426.80" y="498.31" width="374" height="60.47" fill="#ffb400"/><rect x="1426.80" y="564.08" width="374" height="60.47" fill="#ff8c00"/><rect x="1426.80" y="629.85" width="374" height="60.47" fill="#ffa500"/><rect x="1426.80" y="695.62" width="374" height="60.47" fill="#ff8a00"/><rect x="1426.80" y="761.39" width="374" height="60.47" fill="#ffa500"/><path d="M575.3 297.5 H582 V828" fill="none" stroke="#000" stroke-width="1"/><path d="M575.3 331.24 H582" stroke="#000"/><text transform="translate(573,334.84) scale(1,0.86)" text-anchor="end" font-family="Liberation Sans" font-size="10" fill="#000">T4 2020</text><path d="M575.3 397.01 H582" stroke="#000"/><text transform="translate(573,400.61) scale(1,0.86)" text-anchor="end" font-family="Liberation Sans" font-size="10" fill="#000">T3 2020</text><path d="M575.3 462.78 H582" stroke="#000"/><text transform="translate(573,466.38) scale(1,0.86)" text-anchor="end" font-family="Liberation Sans" font-size="10" fill="#000">T2 2020</text><path d="M575.3 528.55 H582" stroke="#000"/><text transform="translate(573,532.15) scale(1,0.86)" text-anchor="end" font-family="Liberation Sans" font-size="10" fill="#000">T1 2020</text><path d="M575.3 594.32 H582" stroke="#000"/><text transform="translate(573,597.92) scale(1,0.86)" text-anchor="end" font-family="Liberation Sans" font-size="10" fill="#000">T4 2019</text><path d="M575.3 660.09 H582" stroke="#000"/><text transform="translate(573,663.69) scale(1,0.86)" text-anchor="end" font-family="Liberation Sans" font-size="10" fill="#000">T3 2019</text><path d="M575.3 725.86 H582" stroke="#000"/><text transform="translate(573,729.46) scale(1,0.86)" text-anchor="end" font-family="Liberation Sans" font-size="10" fill="#000">T2 2019</text><path d="M575.3 791.63 H582" stroke="#000"/><text transform="translate(573,795.23) scale(1,0.86)" text-anchor="end" font-family="Liberation Sans" font-size="10" fill="#000">T1 2019</text><path d="M575.3 828 H1834.5" fill="none" stroke="#222" stroke-width="1.4"/><path d="M582 833.5 V828 M1834 828 V833.5" fill="none" stroke="#000" stroke-width="1"/><path d="M801.00 827.5 V833.5" stroke="#000"/><text transform="translate(801.00,843.2) scale(1,0.86)" text-anchor="middle" font-family="Liberation Sans" font-size="10" fill="#000">Loisirs</text><path d="M1207.40 827.5 V833.5" stroke="#000"/><text transform="translate(1207.40,843.2) scale(1,0.86)" text-anchor="middle" font-family="Liberation Sans" font-size="10" fill="#000">Alimentaire</text><path d="M1613.80 827.5 V833.5" stroke="#000"/><text transform="translate(1613.80,843.2) scale(1,0.86)" text-anchor="middle" font-family="Liberation Sans" font-size="10" fill="#000">Autre</text></svg>
<svg style="position:absolute;left:1640px;top:242px;" width="22" height="20" viewBox="0 0 22 20"><path d="M10.8 2.2 A7.6 7.6 0 0 0 5.6 15" fill="none" stroke="#666" stroke-width="2.2" stroke-linecap="round"/><path d="M2.7 17.5 L7.8 17.5 L7.8 12.9 Z" fill="#666" stroke="#666" stroke-width="0.6" stroke-linejoin="round"/><path d="M10.8 17.4 A7.6 7.6 0 0 0 16 4.6" fill="none" stroke="#666" stroke-width="2.2" stroke-linecap="round"/><path d="M14 2 L19 2.2 L14 6.8 Z" fill="#666" stroke="#666" stroke-width="0.6" stroke-linejoin="round"/></svg>
<svg style="position:absolute;left:1670px;top:249.4px;" width="7" height="6" viewBox="0 0 7 6"><path d="M0 0 H7 L3.5 5.5 Z" fill="#666"/></svg>
<svg style="position:absolute;left:1690px;top:242px;" width="22" height="22" viewBox="0 0 22 22"><path d="M1,7.3 L7.7,1.5 V5.3 H12.1 A6.7,6.7 0 0 1 12.1,18.7 H11.1 V14.85 H12.1 A2.85,2.85 0 0 0 12.1,9.15 H7.7 V13 Z" fill="#d2d4d4"/></svg>
<svg style="position:absolute;left:1724px;top:242px;" width="22" height="22" viewBox="0 0 22 22"><path d="M19,7.3 L12.1,1.5 V5.3 H7.5 A6.7,6.7 0 0 0 7.5,18.7 H8.9 V14.85 H7.5 A2.85,2.85 0 0 1 7.5,9.15 H12.1 V13 Z" fill="#d2d4d4"/></svg>
<svg style="position:absolute;left:1758px;top:244.5px;" width="20" height="15" viewBox="0 0 20 15"><rect x="1.3" y="1.3" width="17.6" height="12.1" rx="1" fill="none" stroke="#666" stroke-width="1.3"/><path d="M12.1 3.4 H16.3 V7.4 Z M3.2 7.3 V11.3 H7.4 Z" fill="#666"/></svg>
<svg style="position:absolute;left:1793.5px;top:242px;" width="17" height="20" viewBox="0 0 17 20"><path d="M0.3 2.6 L6.6 11.8 V19.2 C8.5 18 10.4 16.5 10.4 15.4 C10 14.5 10.5 13 11.6 11.8 L16.6 2.6 Z" fill="#666"/><ellipse cx="8.4" cy="2.5" rx="8.2" ry="1.8" fill="#666"/><ellipse cx="8.4" cy="2.8" rx="6.4" ry="1" fill="#a3a3a3"/></svg>
<svg style="position:absolute;left:1827px;top:244px;" width="18" height="16" viewBox="0 0 18 16"><rect x="0.5" y="9.5" width="3.6" height="6" rx="1.6" fill="#ccc"/><rect x="6.5" y="5.5" width="3.6" height="10" rx="1.6" fill="#ccc"/><rect x="12.7" y="0.5" width="3.6" height="15" rx="1.6" fill="#ccc"/></svg>
<svg style="position:absolute;left:1855px;top:249.4px;" width="7" height="6" viewBox="0 0 7 6"><path d="M0 0 H7 L3.5 5.5 Z" fill="#666"/></svg>
<svg style="position:absolute;left:1879.5px;top:243px;" width="5" height="18" viewBox="0 0 5 18"><circle cx="2.4" cy="2.3" r="2.2" fill="#666"/><circle cx="2.4" cy="8.8" r="2.2" fill="#666"/><circle cx="2.4" cy="15.5" r="2.2" fill="#666"/></svg>
<div style="position:absolute;left:1883px;top:286px;width:15px;height:577px;background:#f0f0f0"></div>
<svg style="position:absolute;left:1885.5px;top:291px;" width="10" height="6" viewBox="0 0 10 6"><path d="M1 5 L5 1 L9 5 Z" fill="#999"/></svg>
<svg style="position:absolute;left:1885.5px;top:851px;" width="10" height="6" viewBox="0 0 10 6"><path d="M1 1 L5 5 L9 1 Z" fill="#999"/></svg>
<div style="position:absolute;left:524px;top:252px;width:262px;height:46px;border:3px solid #fa0010;box-sizing:border-box"></div>
<svg style="position:absolute;left:533.6px;top:267.5px;" width="17" height="17" viewBox="0 0 17 17"><path d="M8.7 0.5 L16.6 9.1 H15.5 V15.9 H10.4 V12.5 H6.4 V15.9 H1.4 V9.1 H0.4 Z" fill="#f7a100"/></svg>
<div style="position:absolute;left:557.2px;top:270.99px;font-size:11px;line-height:11px;font-weight:400;color:#f08a1c;white-space:nowrap;">Rayonnage</div>
<div style="position:absolute;left:621px;top:270.99px;font-size:11px;line-height:11px;font-weight:400;color:#777;white-space:nowrap;">〉</div>
<div style="position:absolute;left:636.6px;top:270.99px;font-size:11px;line-height:11px;font-weight:400;color:#888;white-space:nowrap;">Général</div>
<div style="position:absolute;left:2px;top:880px;width:90px;height:32px;background:#139ed8;border-radius:6px"></div>
<div style="position:absolute;left:2.0px;top:890.07px;width:90px;text-align:center;font-size:13.5px;line-height:13.5px;font-weight:400;color:#fff;white-space:nowrap;">Aide</div>
<div style="position:absolute;left:1620px;top:880px;width:91px;height:32px;background:#fff;border:1px solid #139ed8;border-radius:6px;box-sizing:border-box"></div>
<div style="position:absolute;left:1620.0px;top:890.07px;width:91px;text-align:center;font-size:13.5px;line-height:13.5px;font-weight:400;color:#139ed8;white-space:nowrap;">Appliquer</div>
<div style="position:absolute;left:1717px;top:880px;width:90px;height:32px;background:#139ed8;border-radius:6px"></div>
<div style="position:absolute;left:1717.0px;top:890.07px;width:90px;text-align:center;font-size:13.5px;line-height:13.5px;font-weight:400;color:#fff;white-space:nowrap;">OK</div>
<div style="position:absolute;left:1812px;top:880px;width:90px;height:32px;background:#fff;border:1px solid #139ed8;border-radius:6px;box-sizing:border-box"></div>
<div style="position:absolute;left:1812.0px;top:890.07px;width:90px;text-align:center;font-size:13.5px;line-height:13.5px;font-weight:400;color:#139ed8;white-space:nowrap;">Annuler</div>
</body></html>
